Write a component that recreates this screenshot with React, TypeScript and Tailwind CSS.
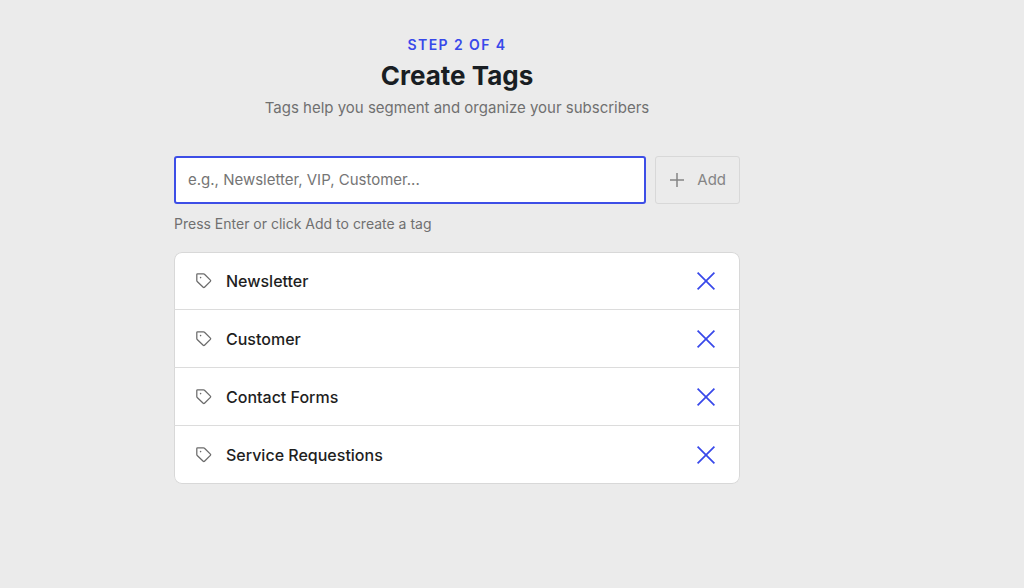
import { useState } from "react";
import type { FormEvent } from "react";

const initialTags = ["Newsletter", "Customer", "Contact Forms", "Service Requestions"];

function TagIcon() {
  return (
    <svg
      className="size-4 shrink-0 text-[#6b6b6b]"
      viewBox="0 0 16 16"
      fill="none"
      stroke="currentColor"
      strokeWidth="1.25"
      strokeLinejoin="round"
      aria-hidden="true"
    >
      <path d="M.8 1.5c0-.4.3-.7.7-.7h6c.4 0 .7.1 1 .4l5.9 5.9c.4.4.4.9 0 1.3l-5.9 5.9c-.4.4-.9.4-1.3 0L1.2 8.5c-.3-.3-.4-.6-.4-1Z" />
      <circle cx="4.6" cy="4.6" r="0.8" fill="currentColor" stroke="none" />
    </svg>
  );
}

function CloseIcon() {
  return (
    <svg className="size-5" viewBox="0 0 20 20" stroke="currentColor" strokeWidth="1.7" aria-hidden="true">
      <path d="M1.6 1.6l16.8 16.8M18.4 1.6L1.6 18.4" />
    </svg>
  );
}

function PlusIcon() {
  return (
    <svg className="size-4" viewBox="0 0 16 16" stroke="currentColor" strokeWidth="1.5" aria-hidden="true">
      <path d="M8 1v14M1 8h14" />
    </svg>
  );
}

export default function App() {
  const [tags, setTags] = useState(initialTags);
  const [name, setName] = useState("");

  const addTag = (event: FormEvent) => {
    event.preventDefault();
    const value = name.trim();
    if (!value || tags.includes(value)) return;
    setTags([...tags, value]);
    setName("");
  };

  return (
    <div className="min-h-screen bg-[#ebebeb] pt-9 pr-[110px] pb-12 font-['Inter',sans-serif] text-[#1e1e1e]">
      <main className="mx-auto max-w-[566px]">
        <header className="text-center">
          <p className="text-sm leading-[18px] font-semibold tracking-widest text-[#3848ea]">STEP 2 OF 4</p>
          <h1 className="mt-0.5 text-[26px] leading-10 font-bold text-[#191e23]">Create Tags</h1>
          <p className="text-[15px] leading-6 text-[#707070]">Tags help you segment and organize your subscribers</p>
        </header>

        <form onSubmit={addTag} className="mt-9">
          <div className="flex items-center gap-[9px]">
            <input
              type="text"
              aria-label="Tag name"
              aria-describedby="tag-hint"
              value={name}
              onChange={(event) => setName(event.target.value)}
              placeholder="e.g., Newsletter, VIP, Customer..."
              className="h-12 min-w-0 flex-1 rounded-[3px] border-2 border-[#3d4ee6] bg-white px-3 pb-0.5 text-[15px] outline-none placeholder:text-[#757575]"
            />
            <button
              type="submit"
              className="flex h-12 items-center gap-3 rounded-[3px] border border-[#d8d8d8] px-[13px] text-[15px] text-[#858585]"
            >
              <PlusIcon />
              Add
            </button>
          </div>
          <p id="tag-hint" className="mt-2 text-sm leading-6 text-[#707070]">
            Press Enter or click Add to create a tag
          </p>
        </form>

        <ul className="mt-4 rounded-lg bg-white ring-1 ring-[#d8d8d8] ring-inset">
          {tags.map((tag) => (
            <li key={tag} className="flex h-[58px] items-center gap-3.5 border-b border-[#dcdcdc] pr-6 pl-[22px] last:border-b-0">
              <TagIcon />
              <span className="flex-1 text-base font-medium">{tag}</span>
              <button
                type="button"
                aria-label={`Remove ${tag}`}
                onClick={() => setTags(tags.filter((item) => item !== tag))}
                className="text-[#3848ea]"
              >
                <CloseIcon />
              </button>
            </li>
          ))}
        </ul>
      </main>
    </div>
  );
}
